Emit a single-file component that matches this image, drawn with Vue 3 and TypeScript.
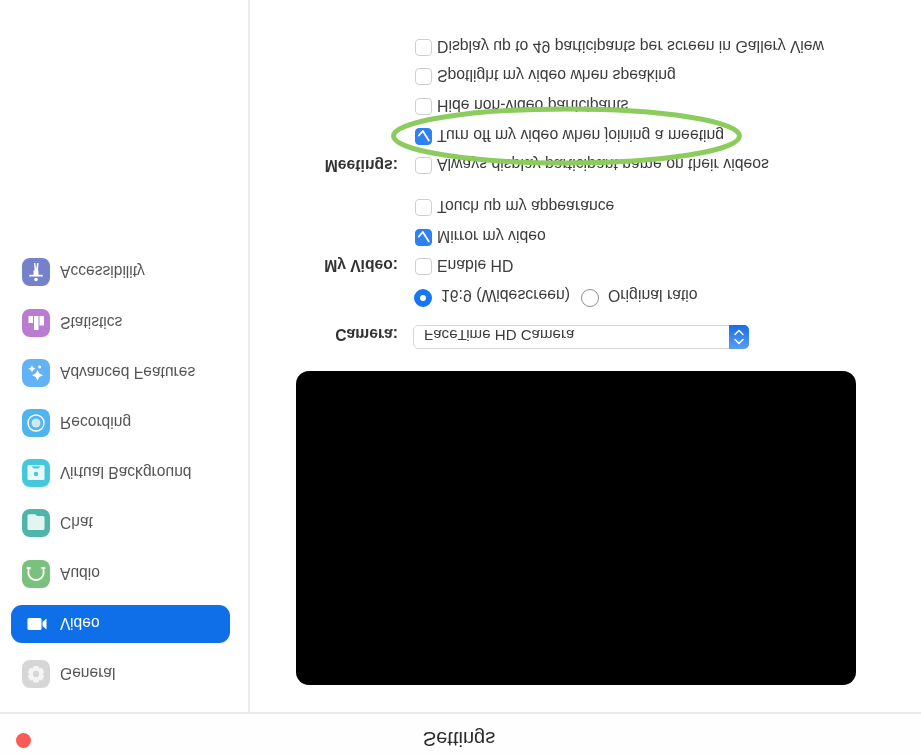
<script setup lang="ts">
interface NavItem { id: string; label: string; bg: string; active?: boolean }
const nav: NavItem[] = [
  { id: 'general', label: 'General', bg: '#d6d6d6' },
  { id: 'video', label: 'Video', bg: 'transparent', active: true },
  { id: 'audio', label: 'Audio', bg: '#7bc17e' },
  { id: 'chat', label: 'Chat', bg: '#4db6a8' },
  { id: 'vb', label: 'Virtual Background', bg: '#45c8dc' },
  { id: 'rec', label: 'Recording', bg: '#50b4ee' },
  { id: 'adv', label: 'Advanced Features', bg: '#63b2f6' },
  { id: 'stats', label: 'Statistics', bg: '#bb7bd0' },
  { id: 'access', label: 'Accessibility', bg: '#7581c9' },
]
const myVideo = [
  { label: 'Enable HD', on: false },
  { label: 'Mirror my video', on: true },
  { label: 'Touch up my appearance', on: false },
]
const meetings = [
  { label: 'Always display participant name on their videos', on: false },
  { label: 'Turn off my video when joining a meeting', on: true },
  { label: 'Hide non-video participants', on: false },
  { label: 'Spotlight my video when speaking', on: false },
  { label: 'Display up to 49 participants per screen in Gallery View', on: false },
]
</script>

<template>
  <div class="page">
    <header class="titlebar">
      <span class="close"></span>
      <span class="title">Settings</span>
    </header>
    <div class="body">
      <aside class="sidebar">
        <div v-for="item in nav" :key="item.id" class="nav-item" :class="{ active: item.active }">
          <span class="nav-icon" :style="{ background: item.bg }">
            <svg viewBox="0 0 28 28" width="28" height="28">
              <g v-if="item.id === 'general'" fill="#f4f4f4">
                <path fill-rule="evenodd" d="M11.6 5.5h4.8l1 2.4 2.5-.4 2.4 4.2-1.6 2 1.6 2-2.4 4.2-2.5-.4-1 2.4h-4.8l-1-2.4-2.5.4-2.4-4.2 1.6-2-1.6-2 2.4-4.2 2.5.4zM14 11a3.1 3.1 0 1 0 0 6.2 3.1 3.1 0 0 0 0-6.2z" />
              </g>
              <g v-else-if="item.id === 'video'" fill="#fff">
                <rect x="5.5" y="8" width="14" height="12" rx="1.5" />
                <path d="M20.5 12l4-3.500v11l-4-3.500z" />
              </g>
              <g v-else-if="item.id === 'audio'" fill="none" stroke="#fff" stroke-width="1.8" stroke-linecap="round">
                <path d="M7 20c-.7-2-.9-4-.5-6C7.500 10.500 10.500 8 14 8s6.500 2.500 7.500 6c.4 2 .2 4-.5 6" />
                <path d="M5.500 20H8M20 20h2.500" />
              </g>
              <g v-else-if="item.id === 'chat'" fill="#e4f5f1">
                <path d="M7 7h14a1.500 1.500 0 0 1 1.500 1.500v11a1.500 1.500 0 0 1-1.500 1.500h-6l-1.500 1.800H7A1.500 1.500 0 0 1 5.500 21.300V8.500A1.500 1.500 0 0 1 7 7z" />
              </g>
              <g v-else-if="item.id === 'vb'">
                <rect x="5.500" y="7" width="17" height="15" rx="1.500" fill="#e9fafc" />
                <path d="M9.500 20.800h9l-2.300-2.400h-4.400z" fill="#45c8dc" />
                <circle cx="14" cy="13" r="2.200" fill="#45c8dc" />
              </g>
              <g v-else-if="item.id === 'rec'">
                <circle cx="14" cy="14" r="8" fill="none" stroke="#fff" stroke-width="1.400" />
                <circle cx="14" cy="14" r="4.500" fill="#cbe9fb" />
              </g>
              <g v-else-if="item.id === 'adv'" fill="#fff">
                <path d="M15.500 6.500l1.800 3.400 3.700 1.800-3.700 1.800-1.800 3.500-1.800-3.500-3.700-1.800 3.700-1.800z" />
                <path d="M10 14.800l1.200 2.300 2.400 1.200-2.400 1.200-1.200 2.300-1.200-2.300-2.400-1.200 2.400-1.200z" />
                <circle cx="17.700" cy="20" r="1.500" />
              </g>
              <g v-else-if="item.id === 'stats'" fill="#fff">
                <rect x="6.500" y="14" width="4.500" height="7" />
                <rect x="12" y="7" width="4.500" height="14" />
                <rect x="17.500" y="11.500" width="4.500" height="9.500" />
              </g>
              <g v-else-if="item.id === 'access'" fill="#fff">
                <circle cx="14" cy="6.500" r="1.800" />
                <rect x="7" y="9.500" width="14" height="1.800" rx=".9" />
                <path d="M11.500 11h5v4.500h-.5l.5 7.500h-1.400L14 16.500 13.400 23H12l.5-7.500h-1z" />
              </g>
            </svg>
          </span>
          <span class="nav-label">{{ item.label }}</span>
        </div>
      </aside>

      <main class="main">
        <div class="preview"></div>

        <div class="form">
          <div class="form-label camera-label">Camera:</div>
          <div class="select">
            <span class="select-text">FaceTime HD Camera</span>
            <span class="select-btn">
              <svg viewBox="0 0 20 24" width="20" height="24" fill="none" stroke="#fff" stroke-width="1.500" stroke-linecap="round" stroke-linejoin="round">
                <path d="M6 9.500l4-4 4 4" />
                <path d="M6 14.500l4 4 4-4" />
              </svg>
            </span>
          </div>

          <div></div>
          <div class="radios">
            <span class="radio on"></span>
            <span class="radio-label">16:9 (Widescreen)</span>
            <span class="radio"></span>
            <span class="radio-label">Original ratio</span>
          </div>

          <div class="form-label video-label">My Video:</div>
          <div class="group">
            <div v-for="o in myVideo" :key="o.label" class="check-row">
              <span class="check" :class="{ on: o.on }">
                <svg v-if="o.on" viewBox="0 0 18 18" width="18" height="18" fill="none" stroke="#fff" stroke-width="1.800" stroke-linecap="round" stroke-linejoin="round">
                  <path d="M3.800 9.500l4 4.500 6-9.500" />
                </svg>
              </span>
              <span class="check-text">{{ o.label }}</span>
            </div>
          </div>

          <div class="form-label meetings-label">Meetings:</div>
          <div class="group meetings">
            <div v-for="o in meetings" :key="o.label" class="check-row">
              <span class="check" :class="{ on: o.on }">
                <svg v-if="o.on" viewBox="0 0 18 18" width="18" height="18" fill="none" stroke="#fff" stroke-width="1.800" stroke-linecap="round" stroke-linejoin="round">
                  <path d="M3.800 9.500l4 4.500 6-9.500" />
                </svg>
              </span>
              <span class="check-text">{{ o.label }}</span>
            </div>
          </div>
        </div>

        <svg class="ring" viewBox="0 0 352 62" width="352" height="62" fill="none">
          <ellipse cx="175.500" cy="31" rx="173" ry="27" stroke="#8ccb5e" stroke-width="5" />
        </svg>
      </main>
    </div>
  </div>
</template>

<style>
html, body { margin: 0; background: #fff; overflow: hidden; }
</style>

<style scoped>
.page {
  width: 921px;
  height: 755px;
  display: flex;
  flex-direction: column;
  transform: scaleY(-1);
  filter: blur(0.3px);
  font-family: "Liberation Sans", Arial, sans-serif;
  font-size: 15.800px;
  color: #3c3c3c;
  background: #fff;
  overflow: hidden;
}
.titlebar {
  height: 41px;
  flex: none;
  border-bottom: 2px solid #e9e9e9;
  display: flex;
  align-items: center;
  justify-content: center;
  position: relative;
  background: #fdfefd;
}
.close {
  position: absolute;
  left: 16px;
  top: 7px;
  width: 15px;
  height: 15px;
  border-radius: 50%;
  background: #f95b57;
}
.title {
  font-size: 20px;
  color: #2a2a2a;
  margin-left: -3px;
  margin-bottom: 8px;
}
.body {
  flex: 1;
  display: flex;
  min-height: 0;
  position: relative;
}
.sidebar {
  width: 248px;
  flex: none;
  border-right: 2px solid #ececec;
  padding-top: 19px;
  display: flex;
  flex-direction: column;
  gap: 12.200px;
}
.nav-item {
  height: 38px;
  margin: 0 18px 0 11px;
  padding-left: 11px;
  display: flex;
  align-items: center;
  gap: 10px;
  border-radius: 11px;
  color: #555;
}
.nav-item.active {
  background: #0e6fe8;
  color: #fff;
}
.nav-icon {
  width: 28px;
  height: 28px;
  border-radius: 8px;
  flex: none;
  display: block;
}
.nav-icon svg { display: block; }
.nav-label { font-size: 15.600px; padding-top: 2px; }
.main {
  flex: 1;
  padding: 27px 0 0 46px;
  position: relative;
}
.preview {
  width: 560px;
  height: 314px;
  background: #000;
  border-radius: 13px;
}
.form {
  display: grid;
  grid-template-columns: 102px 1fr;
  column-gap: 15px;
  margin-top: 22px;
  align-items: start;
}
.form-label {
  text-align: right;
  font-weight: 700;
  font-size: 15.700px;
  color: #333;
  line-height: 20px;
}
.camera-label { margin-top: 5px; }
.video-label { margin-top: 13px; }
.meetings-label { margin-top: 23px; }
.select {
  width: 336px;
  height: 24px;
  box-sizing: border-box;
  border: 1px solid #d8d8d8;
  border-radius: 5px;
  display: flex;
  align-items: center;
  background: #fff;
  position: relative;
}
.select-text {
  padding: 2px 0 0 10px;
  font-size: 15.100px;
}
.select-btn {
  position: absolute;
  right: -1px;
  top: -1px;
  width: 20px;
  height: 24px;
  border-radius: 0 5px 5px 0;
  background: linear-gradient(#5a9df5, #1a6de8);
  display: block;
}
.select-btn svg { display: block; }
.radios {
  grid-column: 2;
  display: flex;
  align-items: center;
  margin-top: 16px;
  height: 20px;
}
.radio {
  width: 18px;
  height: 18px;
  box-sizing: border-box;
  border-radius: 50%;
  border: 1.500px solid #8f8f8f;
  background: #fff;
  flex: none;
  margin-left: 1px;
}
.radio.on {
  border: 6px solid #1677f2;
}
.radio-label {
  margin: 0 10px 0 9px;
  padding-top: 5px;
}
.group {
  display: flex;
  flex-direction: column;
  margin-top: 11px;
  margin-left: 2px;
  gap: 9.500px;
}
.meetings {
  margin-top: 22px;
  gap: 9.700px;
}
.check-row {
  display: flex;
  align-items: center;
  gap: 5px;
  height: 20px;
  white-space: nowrap;
}
.check-text { padding-top: 3px; }
.check {
  width: 17px;
  height: 17px;
  box-sizing: border-box;
  border: 1px solid #cfcfcf;
  border-radius: 4px;
  background: #fff;
  flex: none;
  display: block;
}
.check.on {
  background: #2f80f0;
  border-color: #2f80f0;
}
.check svg { display: block; margin: -1px; }
.ring {
  position: absolute;
  left: 141px;
  top: 545px;
}
</style>
